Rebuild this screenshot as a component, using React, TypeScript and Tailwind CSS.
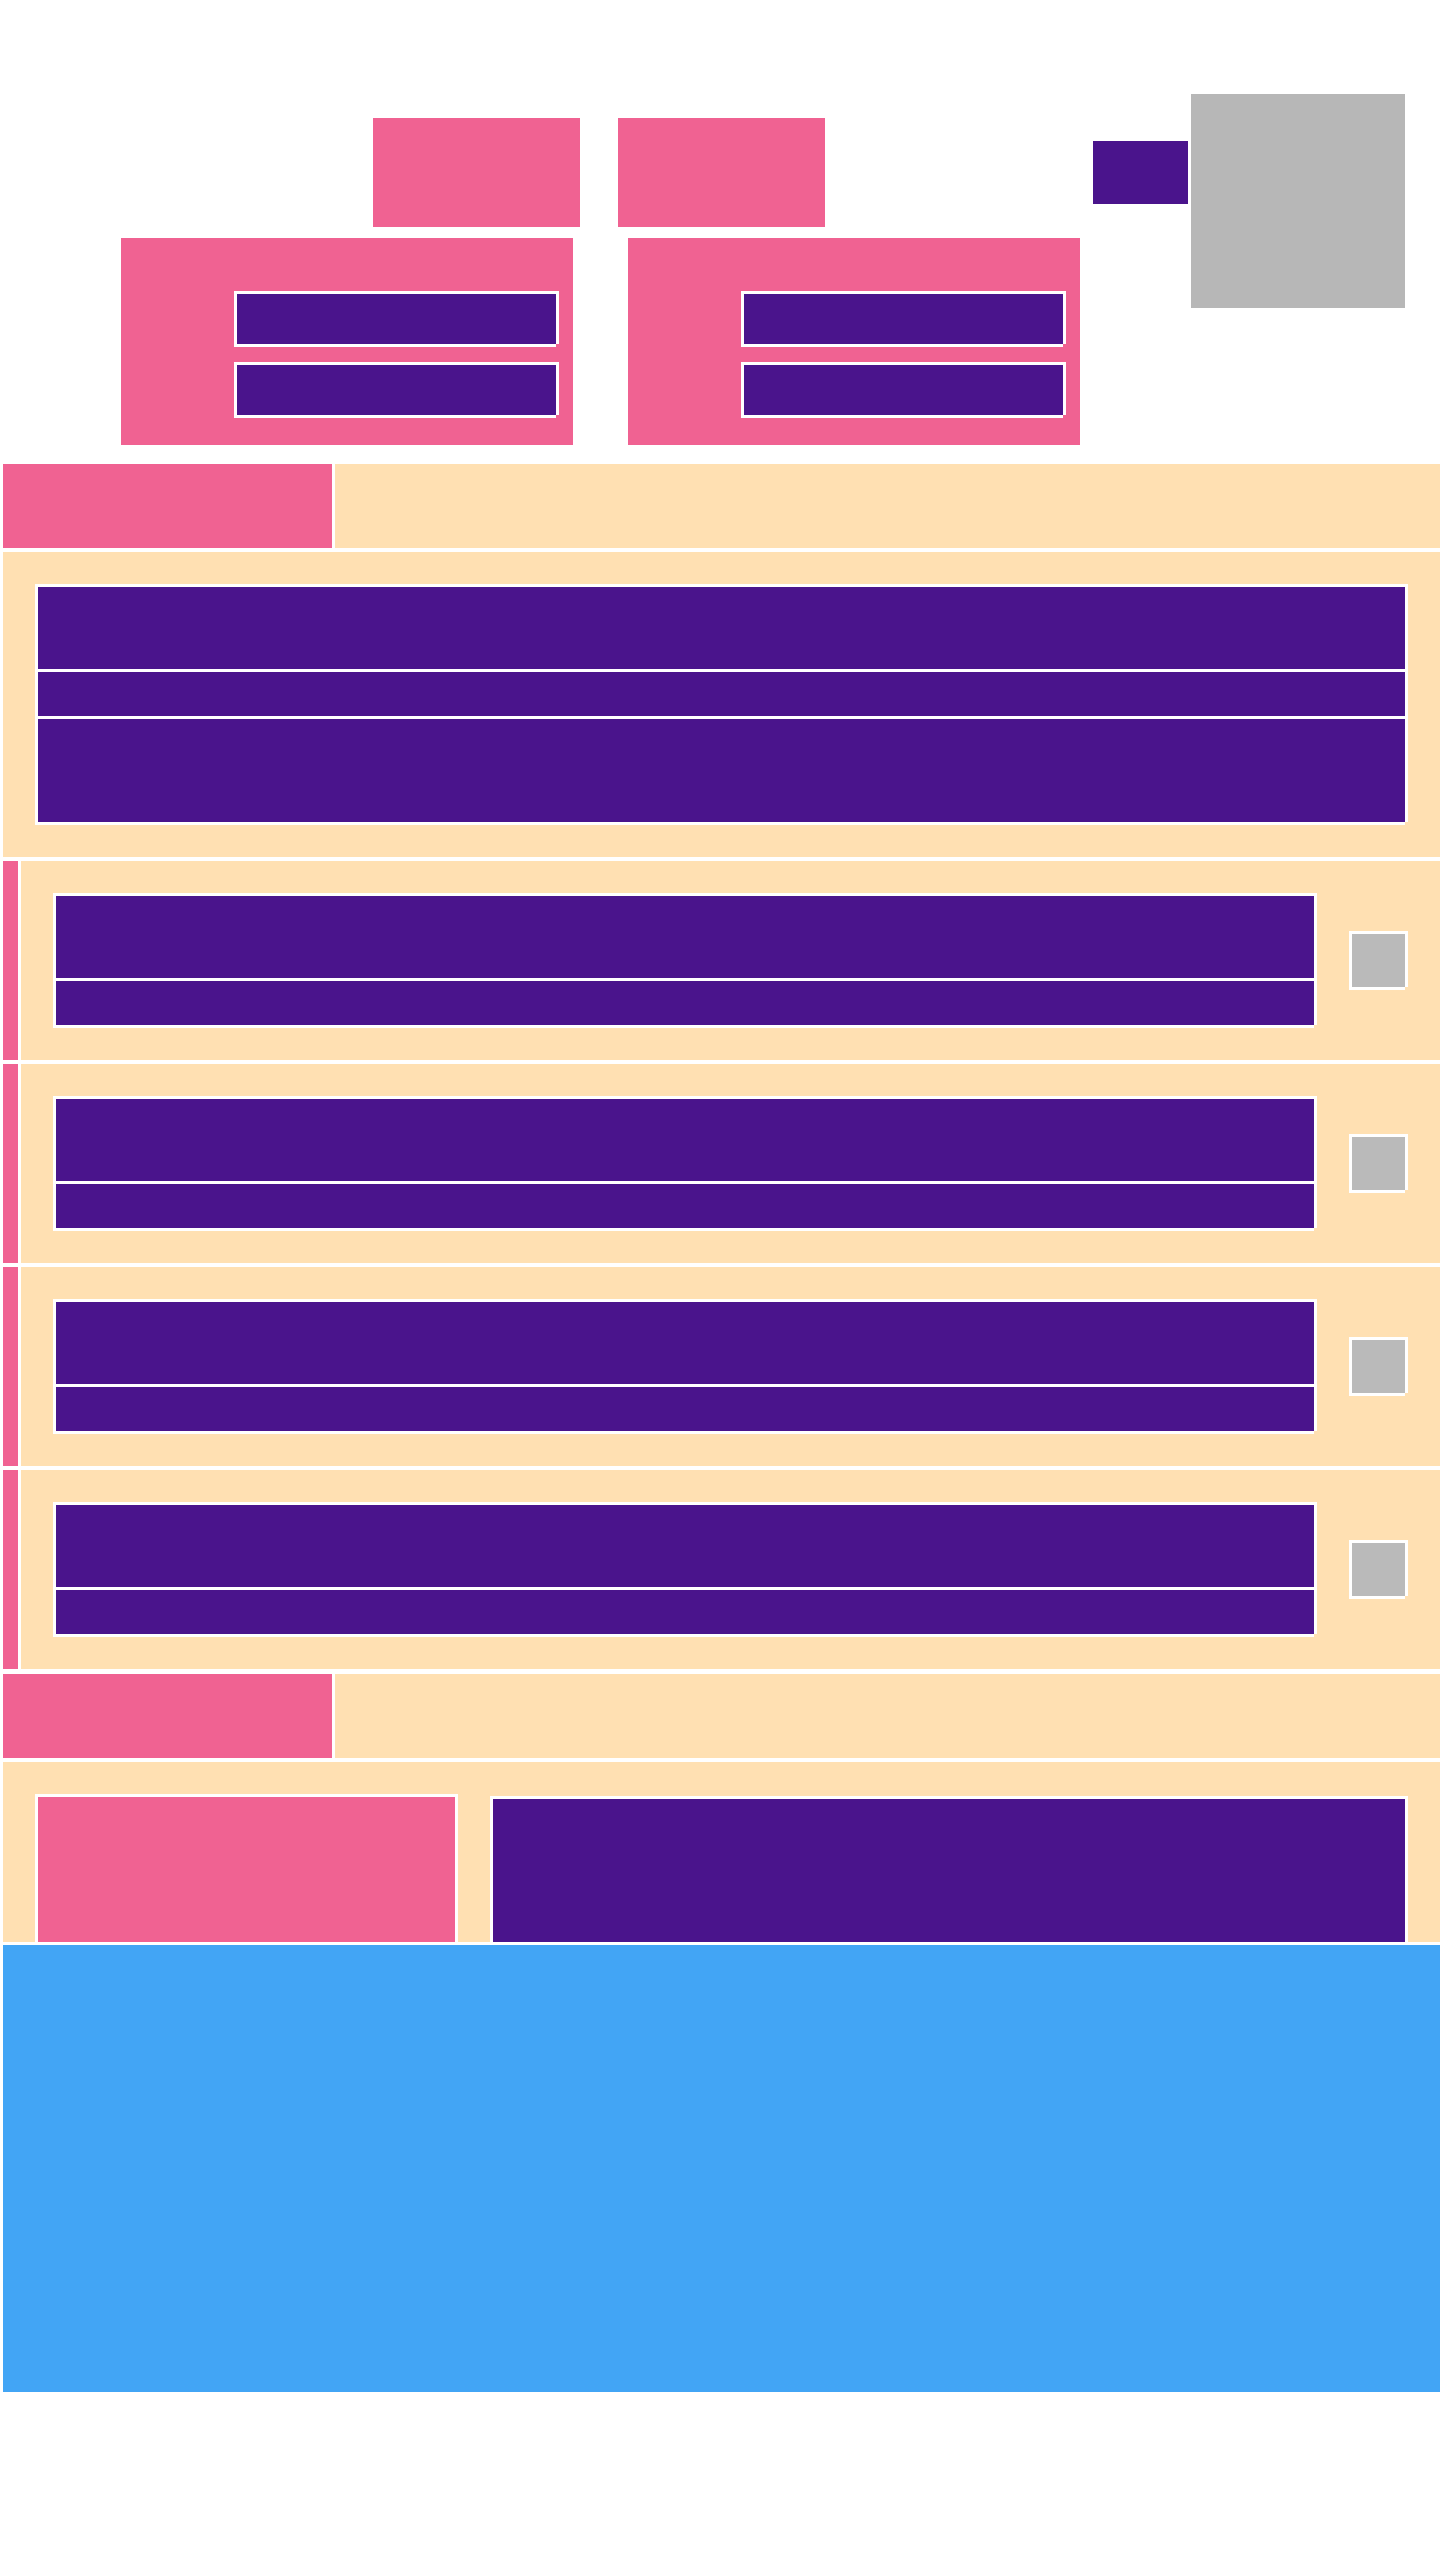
const pink = "bg-[#f06292]";

function Framed({ className }: { className: string }) {
  return (
    <div
      className={`border-t-[3px] border-l-[3px] border-white shadow-[3px_0_0_#fff,0_3px_0_#fff] ${className}`}
    />
  );
}

function Purple({ className }: { className: string }) {
  return <Framed className={`bg-[#4a148c] ${className}`} />;
}

function TopCard() {
  return (
    <div className="flex flex-col items-end gap-[18px] w-[452px] h-[207px] pt-[53px] pr-[17px] bg-[#f06292]">
      <Purple className="w-[322px] h-[53px]" />
      <Purple className="w-[322px] h-[53px]" />
    </div>
  );
}

function Header() {
  return (
    <div className="flex h-[84px] gap-[3px]">
      <div className="w-[329px] bg-[#f06292]" />
      <div className="flex-1 bg-[#ffe0b2]" />
    </div>
  );
}

function Row() {
  return (
    <div className="flex h-[199px] gap-[3px]">
      <div className="w-[15px] bg-[#f06292]" />
      <div className="flex flex-1 items-start gap-[35px] pt-8 pl-8 pr-[35px] bg-[#ffe0b2]">
        <div className="flex flex-1 flex-col">
          <Purple className="h-[85px]" />
          <Purple className="h-[47px]" />
        </div>
        <Framed className="w-[56px] h-[56px] mt-[38px] bg-[#bababa]" />
      </div>
    </div>
  );
}

export default function App() {
  return (
    <div className="w-[1440px] h-[2560px] bg-white pl-[3px]">
      <div className="flex pt-[94px] pb-[19px] pl-[118px] pr-[35px]">
        <div className="flex flex-1 flex-col gap-[11px] pt-6 pr-[3px]">
          <div className="flex items-center pl-[252px] gap-[38px]">
            <div className={`w-[207px] h-[109px] ${pink}`} />
            <div className={`w-[207px] h-[109px] ${pink}`} />
            <div className="w-[95px] h-[63px] ml-[230px] bg-[#4a148c]" />
          </div>
          <div className="flex gap-[55px]">
            <TopCard />
            <TopCard />
          </div>
        </div>
        <div className="w-[214px] h-[214px] bg-[#b7b7b7]" />
      </div>

      <div className="flex flex-col">
        <Header />
        <div className="flex flex-col mt-1 h-[305px] pt-8 pl-8 pr-[35px] bg-[#ffe0b2]">
          <Purple className="h-[85px]" />
          <Purple className="h-[47px]" />
          <Purple className="h-[106px]" />
        </div>
        <div className="flex flex-col gap-1 mt-1">
          <Row />
          <Row />
          <Row />
          <Row />
        </div>
        <div className="mt-[5px]">
          <Header />
        </div>
        <div className="flex items-end gap-[35px] mt-1 h-[180px] pt-8 pl-8 pr-[35px] bg-[#ffe0b2]">
          <Framed className={`w-[420px] h-[148px] ${pink}`} />
          <Purple className="flex-1 h-[146px]" />
        </div>
        <div className="h-[447px] mt-[3px] bg-[#42a5f5]" />
      </div>
    </div>
  );
}
